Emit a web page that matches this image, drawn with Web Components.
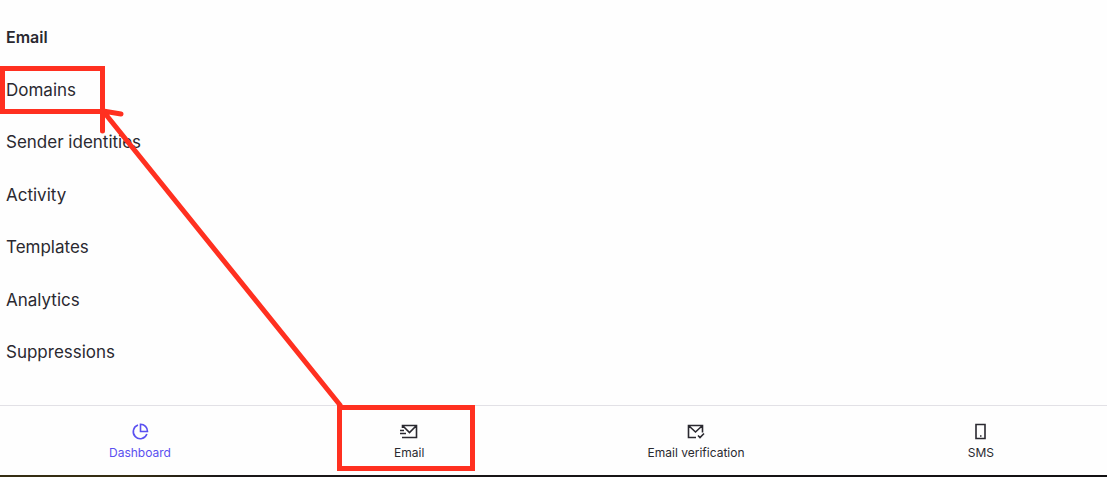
<!DOCTYPE html>
<html lang="en">
<head>
<meta charset="utf-8">
<meta name="viewport" content="width=device-width, initial-scale=1">
<title>Email</title>
<style>
  html, body { margin: 0; background: #fefefe; }
  body { font-family: Inter, "Liberation Sans", sans-serif; color: #2a2930; }
</style>
</head>
<body>
<app-shell>
  <side-menu heading="Email">
    <menu-entry>Domains</menu-entry>
    <menu-entry>Sender identities</menu-entry>
    <menu-entry>Activity</menu-entry>
    <menu-entry>Templates</menu-entry>
    <menu-entry>Analytics</menu-entry>
    <menu-entry>Suppressions</menu-entry>
  </side-menu>
  <tab-bar slot="footer">
    <tab-item icon="dashboard" active>Dashboard</tab-item>
    <tab-item icon="email">Email</tab-item>
    <tab-item icon="verify">Email verification</tab-item>
    <tab-item icon="sms">SMS</tab-item>
  </tab-bar>
  <red-markup slot="overlay"></red-markup>
</app-shell>

<script>
const define = (name, html, setup) => {
  const template = document.createElement('template');
  template.innerHTML = html;
  customElements.define(name, class extends HTMLElement {
    constructor() {
      super();
      this.attachShadow({ mode: 'open' }).append(template.content.cloneNode(true));
    }
    connectedCallback() { if (setup) setup(this, this.shadowRoot); }
  });
};

define('app-shell', `
  <style>
    :host { display: flex; flex-direction: column; min-height: 100vh; position: relative; overflow: hidden; }
    main { flex: 1; display: flex; }
    .edge { height: 2px; background: linear-gradient(90deg, #352d12 0, #352d12 12%, #1a1718 20%, #121012 100%); }
  </style>
  <main><slot></slot></main>
  <slot name="footer"></slot>
  <div class="edge"></div>
  <slot name="overlay"></slot>`);

define('side-menu', `
  <style>
    :host { display: flex; flex: 1; }
    nav { flex: 1; display: flex; flex-direction: column; justify-content: space-between; align-items: flex-start; padding: 25px 6px 41px; }
    h2 { margin: 0; font-size: 16px; line-height: 24px; font-weight: 600; }
  </style>
  <nav aria-label="Email"><h2></h2><slot></slot></nav>`,
  (el, root) => { root.querySelector('h2').textContent = el.getAttribute('heading'); });

define('menu-entry', `
  <style>
    :host { display: block; }
    a { display: block; color: inherit; text-decoration: none; font-size: 17px; line-height: 24px; }
  </style>
  <a href="#"><slot></slot></a>`);

define('tab-bar', `
  <style>
    :host { display: block; border-top: 1px solid #e2e1e6; }
    nav { display: flex; justify-content: space-between; padding: 17px 113px 13px 109px; }
  </style>
  <nav aria-label="Products"><slot></slot></nav>`);

const icons = {
  dashboard: '<path d="M7 2.1A7 7 0 1 0 15.9 11"/><path d="M9.500 1.300V8.500H16.500A7 7 0 0 0 9.500 1.300Z"/>',
  email: '<path d="M2.5 5V2.5H16.5V14.5H7M2.5 2.5L9.5 9.5L16.5 2.5M0 7.5H4M0 10.5H6M2 14.5H7"/>',
  verify: '<path d="M9 14.5H1.5V2.5H15.5V9.5M1.5 2.5L8.5 9L15.5 2.5M11 12.5L13 14.5L17 10.5"/>',
  sms: '<path d="M4 1.5H13V15.5H4Z"/><path d="M8 13H9.5"/>'
};

define('tab-item', `
  <style>
    :host { display: block; }
    :host([active]) { color: #5a50f0; }
    a { display: flex; flex-direction: column; align-items: center; gap: 3px; color: inherit; text-decoration: none; font-size: 12px; line-height: 18px; white-space: nowrap; }
    svg { display: block; width: 18px; height: 18px; fill: none; stroke: currentColor; stroke-width: 1.6; }
  </style>
  <a href="#"><svg viewBox="0 0 18 18" aria-hidden="true"></svg><span><slot></slot></span></a>`,
  (el, root) => { root.querySelector('svg').innerHTML = icons[el.getAttribute('icon')]; });

define('red-markup', `
  <style>
    :host { position: absolute; inset: 0; pointer-events: none; }
    svg { display: block; overflow: visible; fill: none; stroke: #ff3020; stroke-width: 5; }
  </style>
  <svg width="480" height="477" aria-hidden="true">
    <rect x="2.5" y="68.5" width="100" height="43"/>
    <rect x="339.5" y="407.5" width="133" height="61"/>
    <path d="M340 405L103 111L121 114M102.5 111V131" stroke-linecap="round" stroke-linejoin="round"/>
  </svg>`);
</script>
</body>
</html>
